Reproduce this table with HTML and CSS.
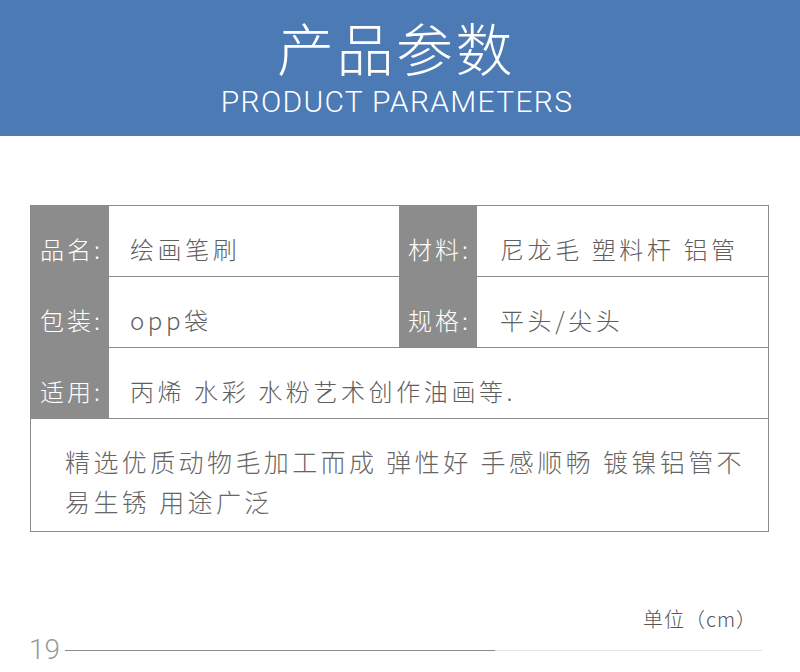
FILE: index.html
```html
<!DOCTYPE html>
<html lang="zh">
<head>
<meta charset="utf-8">
<link rel="stylesheet" href="styles.css">
</head>
<body>
<header class="banner">
  <h1 class="title">产品参数</h1>
  <p class="subtitle">PRODUCT PARAMETERS</p>
</header>
<section class="params">
  <div class="row row-two">
    <div class="label">品名:</div>
    <div class="value">绘画笔刷</div>
    <div class="label">材料:</div>
    <div class="value value-right">尼龙毛 塑料杆 铝管</div>
  </div>
  <div class="row row-two">
    <div class="label">包装:</div>
    <div class="value">opp袋</div>
    <div class="label">规格:</div>
    <div class="value value-right">平头/尖头</div>
  </div>
  <div class="row row-one">
    <div class="label">适用:</div>
    <div class="value">丙烯 水彩 水粉艺术创作油画等.</div>
  </div>
  <div class="desc">精选优质动物毛加工而成 弹性好 手感顺畅 镀镍铝管不易生锈 用途广泛</div>
</section>
<div class="unit">单位（cm）</div>
<footer class="pager">
  <span class="num">19</span>
  <span class="line"></span>
</footer>
</body>
</html>
```
FILE: styles.css
```css
* { box-sizing: border-box; margin: 0; padding: 0; }
html, body { background: #fff; }
body {
  width: 800px;
  height: 672px;
  overflow: hidden;
  font-family: "Noto Sans CJK SC", "Noto Sans", sans-serif;
}
.banner {
  height: 136px;
  background: #4b7ab5;
  color: #fff;
  text-align: center;
  padding-top: 15px;
}
.title {
  font-size: 57px;
  font-weight: 200;
  line-height: 62px;
  letter-spacing: 2.5px;
  padding-right: 8px;
}
.subtitle {
  font-family: "Roboto", "Noto Sans", sans-serif;
  font-weight: 300;
  font-size: 30px;
  line-height: 32px;
  letter-spacing: 1.3px;
  margin-top: 9px;
  padding-right: 6px;
}
.params {
  margin: 69px 0 0 30px;
  width: 739px;
  border: 1px solid #8a8a8a;
}
.row {
  display: grid;
  height: 71px;
  border-bottom: 1px solid #8a8a8a;
}
.row-two { grid-template-columns: 78px 290px 78px 1fr; }
.row-one { grid-template-columns: 78px 1fr; }
.label {
  background: #8c8c8c;
  color: #fff;
  font-size: 24px;
  font-weight: 300;
  letter-spacing: 3px;
  white-space: nowrap;
  padding: 14px 0 0 9px;
  display: flex;
  align-items: center;
  overflow: visible;
}
.value {
  color: #5e5e5e;
  font-size: 24px;
  font-weight: 300;
  letter-spacing: 3.6px;
  white-space: nowrap;
  padding: 14px 0 0 21px;
  display: flex;
  align-items: center;
}
.value-right { padding-left: 23px; }
.desc {
  height: 112px;
  color: #666;
  font-size: 25px;
  font-weight: 300;
  line-height: 40px;
  letter-spacing: 3.4px;
  padding: 22px 18px 0 34px;
}
.unit {
  margin: 73px 0 0 0;
  width: 757px;
  text-align: right;
  color: #555;
  font-size: 20px;
  font-weight: 300;
  line-height: 28px;
  letter-spacing: 1px;
}
.pager {
  display: flex;
  align-items: center;
  margin: 2px 0 0 29px;
  height: 30px;
}
.num {
  font-family: "Roboto", "Noto Sans", sans-serif;
  font-size: 28px;
  color: #9a9a9a;
  line-height: 30px;
  font-weight: 300;
}
.line {
  margin-left: 5px;
  height: 1px;
  width: 697px;
  background: linear-gradient(to right, #8a8a8a 0, #8a8a8a 430px, #e4e4e4 430px, #e4e4e4 100%);
}
```
